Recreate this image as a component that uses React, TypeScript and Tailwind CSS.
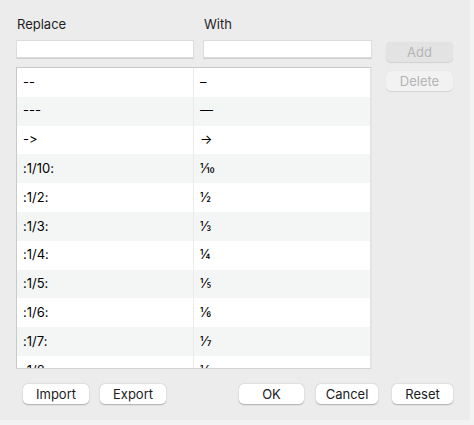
import React from "react";

// replacement table rows, last one is cut off by the list bottom
const rows: [string, string][] = [
  ["--", "–"],
  ["---", "—"],
  ["->", "→"],
  [":1/10:", "⅒"],
  [":1/2:", "½"],
  [":1/3:", "⅓"],
  [":1/4:", "¼"],
  [":1/5:", "⅕"],
  [":1/6:", "⅙"],
  [":1/7:", "⅐"],
  [":1/8:", "⅛"],
];

function PushButton({ label, width, className = "" }: { label: string; width: string; className?: string }) {
  return (
    <button
      className={`${width} h-[20px] rounded-[5px] bg-white text-[13px] leading-none text-[#1c1c1c] shadow-[0_0.5px_1.5px_rgba(0,0,0,0.28)] ${className}`}
    >
      {label}
    </button>
  );
}

export default function App() {
  return (
    <div className="w-[474px] h-[425px] bg-[#f3f3f3] font-['Inter','Noto_Sans',sans-serif] [font-feature-settings:'calt'_0,'liga'_0]">
      <div className="w-[470px] h-[420px] bg-[#ececec] flex flex-col pl-[16px] pt-[16px]">
        <div className="flex gap-[14px]">
          {/* left: labels, inputs and list */}
          <div className="w-[356px] flex flex-col">
            <div className="flex h-4 text-[13px] leading-4 text-[#1f1f1f]">
              <span className="w-[187px] pl-px">Replace</span>
              <span className="pl-px">With</span>
            </div>
            <div className="mt-2 flex gap-[9px]">
              <input className="w-[178px] h-[18px] bg-white border border-[#dcdcdc] shadow-[0_0.5px_0.5px_rgba(0,0,0,0.12)] outline-none" />
              <input className="w-[169px] h-[18px] bg-white border border-[#dcdcdc] shadow-[0_0.5px_0.5px_rgba(0,0,0,0.12)] outline-none" />
            </div>
            <div className="mt-[9px] h-[302px] w-[356px] border-t border-l border-[#c9c9c9] border-r-2 border-r-[#e4e4e4] border-b border-b-[#d4d4d4] overflow-hidden bg-white">
              {rows.map(([from, to], i) => (
                <div
                  key={from}
                  className={`flex h-[28.8px] items-center text-[13px] text-black ${i % 2 === 1 ? "bg-[#f4f5f5]" : "bg-white"}`}
                >
                  <div className="w-[177px] h-full flex items-center pl-[6px] border-r border-[#ebebeb]">{from}</div>
                  <div className="flex-1 pl-[6px]">{to}</div>
                </div>
              ))}
            </div>
          </div>

          {/* right: disabled Add / Delete */}
          <div className="w-[67px] flex flex-col pt-[26px] gap-[9px]">
            <button className="h-[20px] rounded-[5px] bg-[#e3e3e3] text-[13px] leading-none text-[#b4b4b4] shadow-[0_0.5px_1px_rgba(0,0,0,0.12)]">
              Add
            </button>
            <button className="h-[20px] rounded-[5px] bg-[#f2f2f2] text-[13px] leading-none text-[#b4b4b4] shadow-[0_0.5px_1px_rgba(0,0,0,0.1)]">
              Delete
            </button>
          </div>
        </div>

        <div className="mt-[15px] flex">
          <PushButton label="Import" width="w-[66px]" className="ml-[7px]" />
          <PushButton label="Export" width="w-[66px]" className="ml-[11px]" />
          <PushButton label="OK" width="w-[65px]" className="ml-[73px]" />
          <PushButton label="Cancel" width="w-[62px]" className="ml-[12px]" />
          <PushButton label="Reset" width="w-[61px]" className="ml-[14px]" />
        </div>
      </div>
    </div>
  );
}
